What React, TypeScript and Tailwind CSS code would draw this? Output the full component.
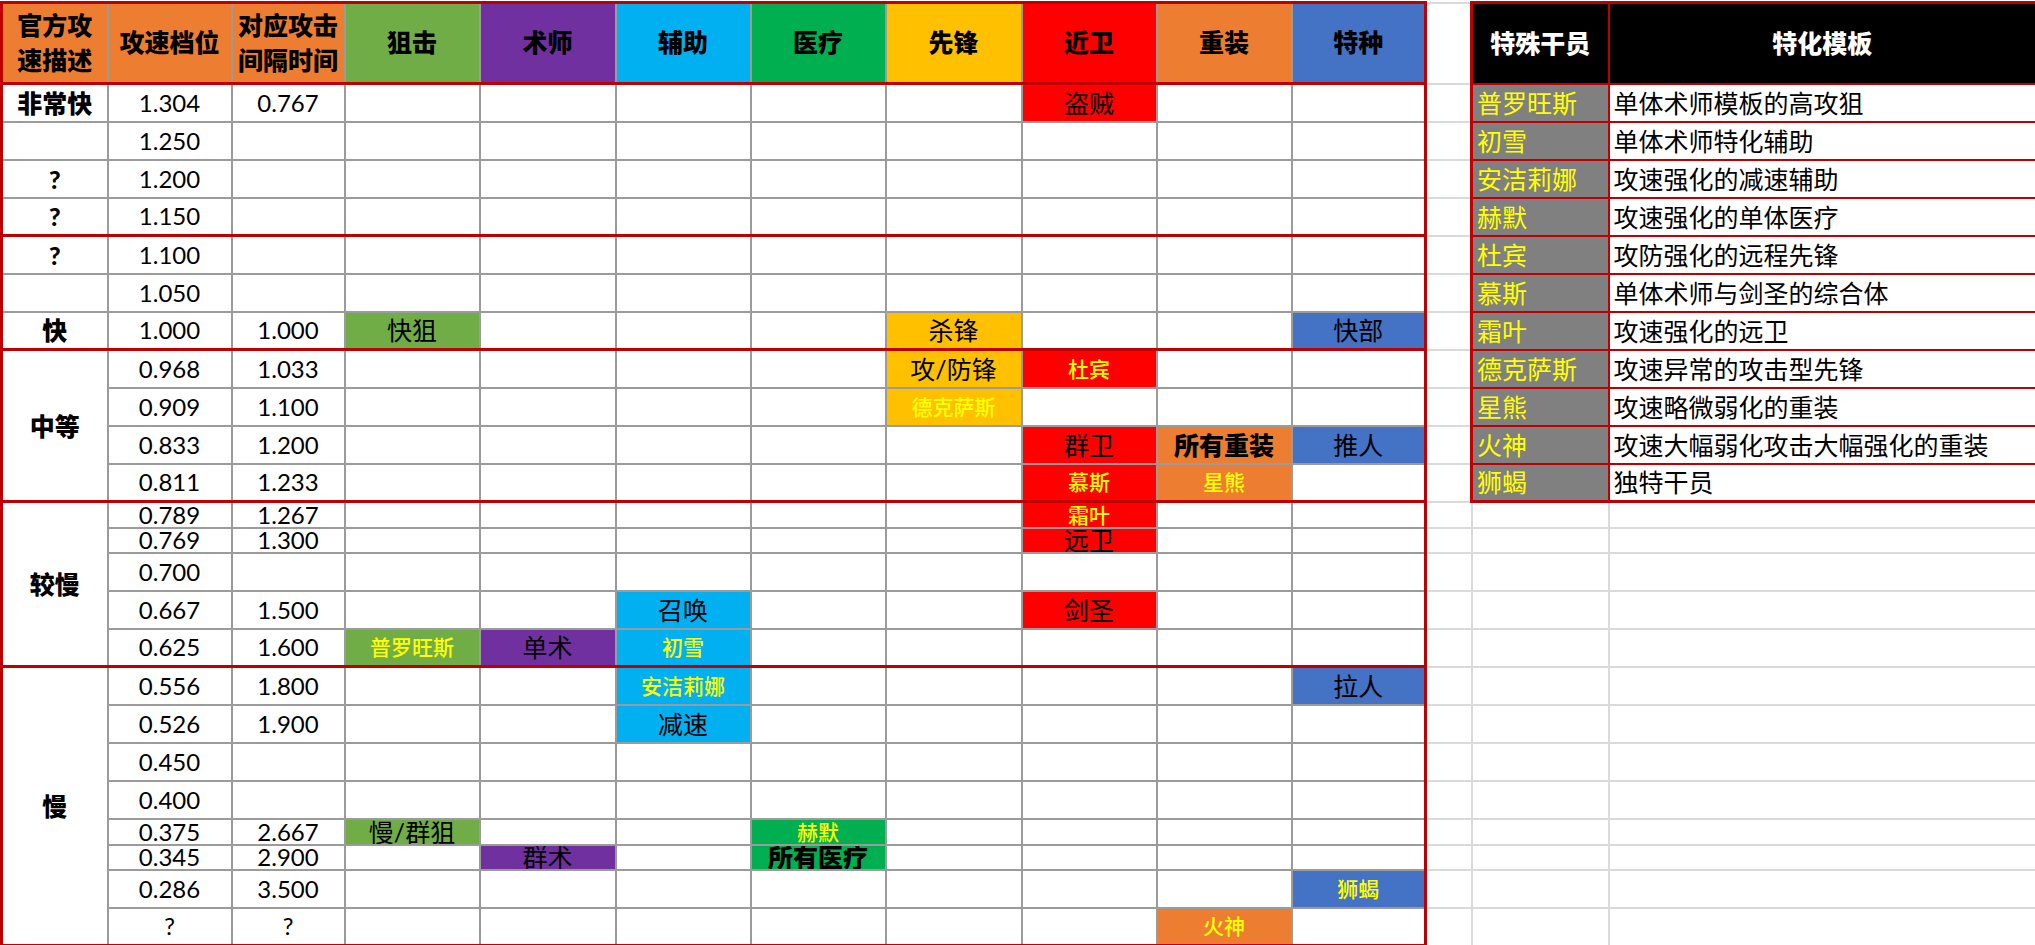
import clsx from 'clsx';

// 职业列的底色，顺序与 CLASSES 对应
const CLASS_BG = [
  'bg-[#70ad47]',
  'bg-[#7030a0]',
  'bg-[#00b0f0]',
  'bg-[#00b050]',
  'bg-[#ffc000]',
  'bg-[#ff0000]',
  'bg-[#ed7d31]',
  'bg-[#4472c4]',
];
const CLASSES = ['狙击', '术师', '辅助', '医疗', '先锋', '近卫', '重装', '特种'];

type Mark = [string, '' | 'y' | 'b'];
type Row = {
  desc: string | null;
  span?: number;
  speed: string;
  interval?: string;
  h?: string;
  end?: boolean;
  marks?: Record<number, Mark>;
};

const ROWS: Row[] = [
  { desc: '非常快', speed: '1.304', interval: '0.767', marks: { 5: ['盗贼', ''] } },
  { desc: '', speed: '1.250' },
  { desc: '?', speed: '1.200' },
  { desc: '?', speed: '1.150', end: true },
  { desc: '?', speed: '1.100' },
  { desc: '', speed: '1.050' },
  {
    desc: '快',
    speed: '1.000',
    interval: '1.000',
    end: true,
    marks: { 0: ['快狙', ''], 4: ['杀锋', ''], 7: ['快部', ''] },
  },
  { desc: '中等', span: 4, speed: '0.968', interval: '1.033', marks: { 4: ['攻/防锋', ''], 5: ['杜宾', 'y'] } },
  { desc: null, speed: '0.909', interval: '1.100', marks: { 4: ['德克萨斯', 'y'] } },
  {
    desc: null,
    speed: '0.833',
    interval: '1.200',
    marks: { 5: ['群卫', ''], 6: ['所有重装', 'b'], 7: ['推人', ''] },
  },
  { desc: null, speed: '0.811', interval: '1.233', end: true, marks: { 5: ['慕斯', 'y'], 6: ['星熊', 'y'] } },
  { desc: '较慢', span: 5, speed: '0.789', interval: '1.267', h: 'h-[26px]', marks: { 5: ['霜叶', 'y'] } },
  { desc: null, speed: '0.769', interval: '1.300', h: 'h-[25px]', marks: { 5: ['远卫', ''] } },
  { desc: null, speed: '0.700' },
  { desc: null, speed: '0.667', interval: '1.500', marks: { 2: ['召唤', ''], 5: ['剑圣', ''] } },
  {
    desc: null,
    speed: '0.625',
    interval: '1.600',
    end: true,
    marks: { 0: ['普罗旺斯', 'y'], 1: ['单术', ''], 2: ['初雪', 'y'] },
  },
  { desc: '慢', span: 8, speed: '0.556', interval: '1.800', marks: { 2: ['安洁莉娜', 'y'], 7: ['拉人', ''] } },
  { desc: null, speed: '0.526', interval: '1.900', marks: { 2: ['减速', ''] } },
  { desc: null, speed: '0.450' },
  { desc: null, speed: '0.400' },
  { desc: null, speed: '0.375', interval: '2.667', h: 'h-[26px]', marks: { 0: ['慢/群狙', ''], 3: ['赫默', 'y'] } },
  { desc: null, speed: '0.345', interval: '2.900', h: 'h-[25px]', marks: { 1: ['群术', ''], 3: ['所有医疗', 'b'] } },
  { desc: null, speed: '0.286', interval: '3.500', marks: { 7: ['狮蝎', 'y'] } },
  { desc: null, speed: '?', interval: '?', end: true, marks: { 6: ['火神', 'y'] } },
];

const SPECIAL = [
  ['普罗旺斯', '单体术师模板的高攻狙'],
  ['初雪', '单体术师特化辅助'],
  ['安洁莉娜', '攻速强化的减速辅助'],
  ['赫默', '攻速强化的单体医疗'],
  ['杜宾', '攻防强化的远程先锋'],
  ['慕斯', '单体术师与剑圣的综合体'],
  ['霜叶', '攻速强化的远卫'],
  ['德克萨斯', '攻速异常的攻击型先锋'],
  ['星熊', '攻速略微弱化的重装'],
  ['火神', '攻速大幅弱化攻击大幅强化的重装'],
  ['狮蝎', '独特干员'],
];

// 行高小于字号时让文字溢出而不撑高行
const CELL = 'p-0 text-center align-middle leading-[18px] whitespace-nowrap overflow-hidden';
const GRID = 'border-2 border-[#9b9b9b]';
const RED_B = 'border-b-[3px] border-b-[#c00000]';
const LIGHT = 'border-2 border-[#dadada]';
const HEAD =
  'p-0 text-center align-middle font-black text-[25px] border-2 border-[#9b9b9b] border-t-[3px] border-t-[#c00000] border-b-[3px] border-b-[#c00000]';
const SIDE = 'p-0 pl-1 text-left align-middle leading-[18px] whitespace-nowrap text-[25px] border-2 border-[#c00000]';

export default function App() {
  return (
    <div className="w-[2035px] h-[945px] overflow-hidden bg-white pt-px text-black font-['Lato','Noto_Sans_CJK_SC',sans-serif]">
      <table className="table-fixed border-collapse w-[2035px]">
        <colgroup>
          <col className="w-[106px]" />
          <col className="w-[124px]" />
          <col className="w-[113px]" />
          <col className="w-[135px]" />
          <col className="w-[136px]" />
          <col className="w-[135px]" />
          <col className="w-[135px]" />
          <col className="w-[136px]" />
          <col className="w-[135px]" />
          <col className="w-[135px]" />
          <col className="w-[134px]" />
          <col className="w-[46px]" />
          <col className="w-[137px]" />
          <col className="w-[428px]" />
        </colgroup>
        <thead>
          <tr className="h-[81px]">
            <th className={clsx(HEAD, 'bg-[#ed7d31] leading-[35px] border-l-[3px] border-l-[#c00000]')}>
              官方攻
              <br />
              速描述
            </th>
            <th className={clsx(HEAD, 'bg-[#ed7d31]')}>攻速档位</th>
            <th className={clsx(HEAD, 'bg-[#ed7d31] leading-[35px]')}>
              对应攻击
              <br />
              间隔时间
            </th>
            {CLASSES.map((name, c) => (
              <th
                key={name}
                className={clsx(HEAD, CLASS_BG[c], c === 7 && 'border-r-[3px] border-r-[#c00000]')}
              >
                {name}
              </th>
            ))}
            <th className={LIGHT} />
            <th className="p-0 text-center align-middle font-black text-[25px] text-white bg-black border-2 border-[#c00000] border-t-[3px] border-l-[3px]">
              特殊干员
            </th>
            <th className="p-0 text-center align-middle font-black text-[25px] text-white bg-black border-2 border-[#c00000] border-t-[3px] border-r-[3px]">
              特化模板
            </th>
          </tr>
        </thead>
        <tbody>
          {ROWS.map((row, i) => {
            const end = row.end && RED_B;
            const side = SPECIAL[i];
            return (
              <tr key={i} className={row.h ?? 'h-[38px]'}>
                {row.desc !== null && (
                  <td
                    rowSpan={row.span}
                    className={clsx(
                      CELL,
                      GRID,
                      'font-black text-[25px] border-l-[3px] border-l-[#c00000]',
                      (row.end || row.span) && RED_B
                    )}
                  >
                    {row.desc}
                  </td>
                )}
                <td className={clsx(CELL, GRID, end, 'text-[24px]')}>{row.speed}</td>
                <td className={clsx(CELL, GRID, end, 'text-[24px]')}>{row.interval}</td>
                {CLASSES.map((name, c) => {
                  const m = row.marks?.[c];
                  return (
                    <td
                      key={name}
                      className={clsx(
                        CELL,
                        GRID,
                        end,
                        c === 7 && 'border-r-[3px] border-r-[#c00000]',
                        m && CLASS_BG[c],
                        m?.[1] === 'y' ? 'text-[21px] font-medium text-[#ffff00]' : 'text-[25px]',
                        m?.[1] === 'b' && 'font-black'
                      )}
                    >
                      {m?.[0]}
                    </td>
                  );
                })}
                <td className={LIGHT} />
                {side ? (
                  <>
                    <td className={clsx(SIDE, 'text-[#ffff00] bg-[#808080] border-l-[3px]', i === 10 && 'border-b-[3px]')}>
                      {side[0]}
                    </td>
                    <td className={clsx(SIDE, 'border-r-[3px]', i === 10 && 'border-b-[3px]')}>{side[1]}</td>
                  </>
                ) : (
                  <>
                    <td className={LIGHT} />
                    <td className={LIGHT} />
                  </>
                )}
              </tr>
            );
          })}
        </tbody>
      </table>
    </div>
  );
}
